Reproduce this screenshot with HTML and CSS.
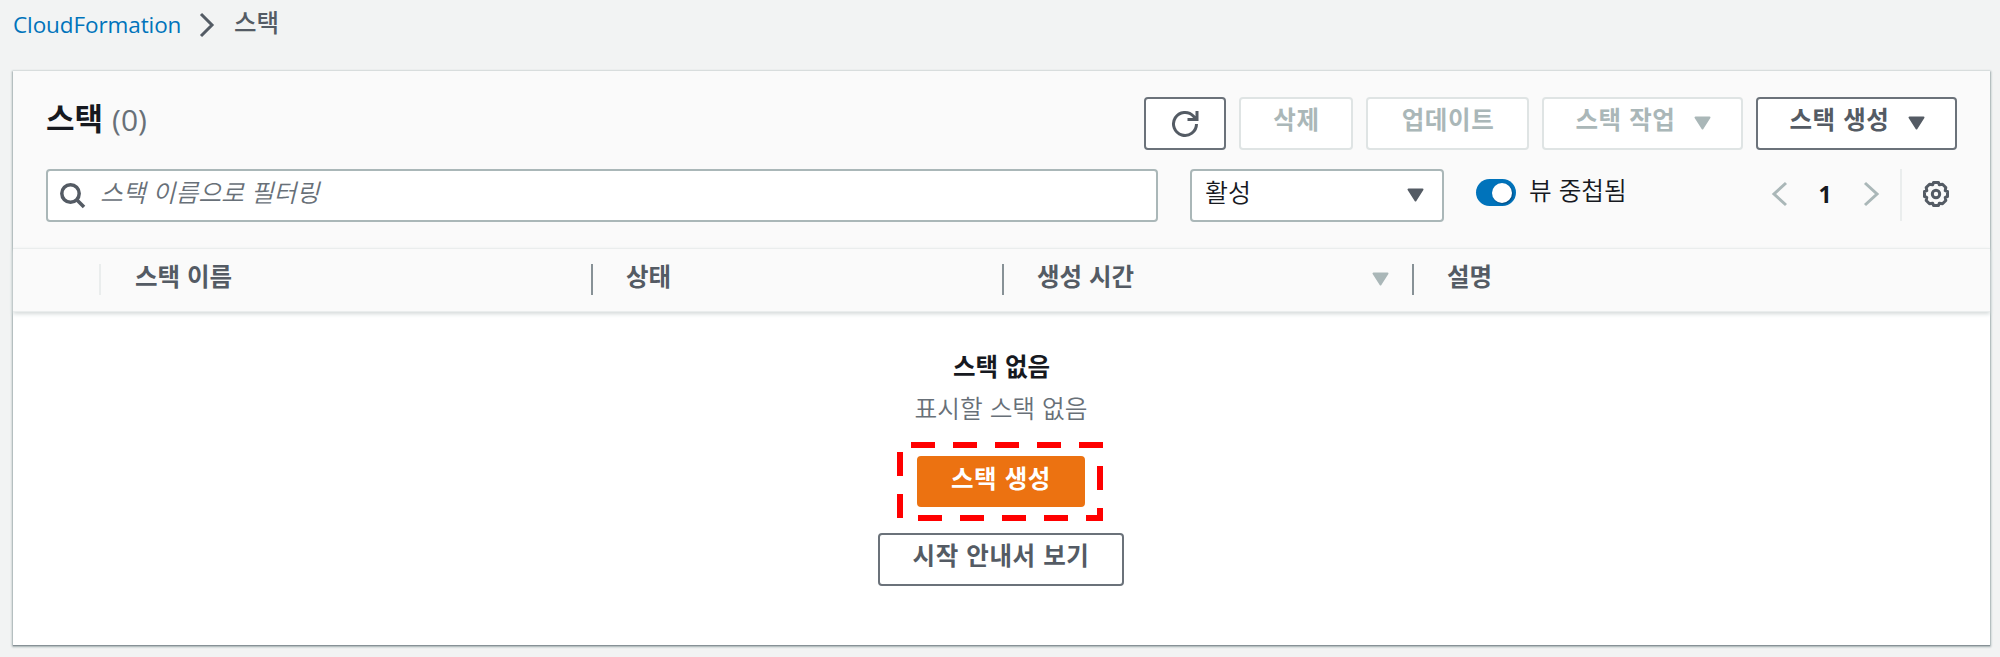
FILE: index.html
```html
<!DOCTYPE html>
<html lang="ko">
<head>
<meta charset="utf-8">
<title>CloudFormation - 스택</title>
<link rel="stylesheet" href="styles.css">
</head>
<body>
<nav class="breadcrumb">
  <a class="crumb-link">CloudFormation</a>
  <svg class="crumb-sep" width="18" height="26" viewBox="0 0 18 26"><path d="M3 2 L14 13 L3 24"/></svg>
  <span class="crumb-current">스택</span>
</nav>
<main class="panel">
  <header class="panel-head">
    <div class="title-row">
      <h1 class="title">스택</h1><span class="count">(0)</span>
      <div class="actions">
        <button class="btn btn-refresh"><svg width="28" height="28" viewBox="0 0 28 28"><path d="M25.500 14 A11.500 11.500 0 1 1 22.500 6.200 L25.500 9.500 M26 1 V9.500 H16.500"/></svg></button>
        <button class="btn btn-delete off"><span>삭제</span></button>
        <button class="btn btn-update off"><span>업데이트</span></button>
        <button class="btn btn-menu off"><span>스택 작업</span><svg class="caret" width="17" height="14" viewBox="0 0 17 14"><path d="M1.500 1.500 H15.500 L8.500 12.500 Z"/></svg></button>
        <button class="btn btn-menu"><span>스택 생성</span><svg class="caret" width="17" height="14" viewBox="0 0 17 14"><path d="M1.500 1.500 H15.500 L8.500 12.500 Z"/></svg></button>
      </div>
    </div>
    <div class="filter-row">
      <div class="search">
        <svg width="26" height="26" viewBox="0 0 26 26"><circle cx="10.500" cy="10.500" r="8.700"/><path d="M16.500 16.500 L24 24"/></svg>
        <span class="placeholder">스택 이름으로 필터링</span>
      </div>
      <div class="select"><span>활성</span><svg class="caret" width="17" height="14" viewBox="0 0 17 14"><path d="M1.500 1.500 H15.500 L8.500 12.500 Z"/></svg></div>
      <div class="toggle"><i class="knob"></i></div>
      <span class="toggle-label">뷰 중첩됨</span>
      <div class="pager">
        <svg class="arrow" width="18" height="26" viewBox="0 0 18 26"><path d="M16 2 L4 13 L16 24"/></svg>
        <span class="page">1</span>
        <svg class="arrow" width="18" height="26" viewBox="0 0 18 26"><path d="M3 2 L15 13 L3 24"/></svg>
        <i class="split"></i>
        <svg class="gear" width="28" height="28" viewBox="0 0 28 28"><path d="M11.500 2.500 H16.500 L17.300 4.800 L20.500 4.200 L23.800 7.500 L23.200 10.700 L25.500 11.500 V16.500 L23.200 17.300 L23.800 20.500 L20.500 23.800 L17.300 23.200 L16.500 25.500 H11.500 L10.700 23.200 L7.500 23.800 L4.200 20.500 L4.800 17.300 L2.500 16.500 V11.500 L4.800 10.700 L4.200 7.500 L7.500 4.200 L10.700 4.800 Z"/><circle cx="14" cy="14" r="3.700"/></svg>
      </div>
    </div>
  </header>
  <div class="columns">
    <div class="col col-select"></div>
    <div class="col col-name"><span>스택 이름</span></div>
    <div class="col col-status"><span>상태</span></div>
    <div class="col col-time"><span>생성 시간</span><svg class="caret" width="17" height="14" viewBox="0 0 17 14"><path d="M1.500 1.500 H15.500 L8.500 12.500 Z"/></svg></div>
    <div class="col col-desc"><span>설명</span></div>
  </div>
  <section class="empty">
    <b class="empty-title">스택 없음</b>
    <span class="empty-text">표시할 스택 없음</span>
    <div class="primary-wrap">
      <button class="btn btn-primary"><span>스택 생성</span></button>
      <svg class="marker" width="206" height="79" viewBox="0 0 206 79">
        <path d="M14 3H38 M56 3H80 M98 3H122 M140 3H164 M182 3H206 M203 24V48 M203 66V79 M206 76H189 M171 76H147 M129 76H105 M87 76H63 M45 76H21 M3 76V52 M3 34V10"/>
      </svg>
    </div>
    <button class="btn btn-guide"><span>시작 안내서 보기</span></button>
  </section>
</main>
</body>
</html>
```

FILE: styles.css
```css
* { box-sizing: border-box; }
body {
  margin: 0;
  height: 657px;
  overflow: hidden;
  background: #f2f3f3;
  color: #16191f;
  font: 25px/36px "Noto Sans CJK KR", sans-serif;
}
svg { display: block; flex: none; fill: none; stroke: #545b64; stroke-width: 3; }
span { white-space: nowrap; }
.breadcrumb { display: flex; height: 71px; padding-left: 13px; }
.crumb-link { width: 185px; margin-top: 7px; color: #0073bb; font: 22.500px/36px "Open Sans", sans-serif; letter-spacing: -0.1px; }
.crumb-sep { margin-top: 12px; }
.crumb-current { margin: 4px 0 0 18px; color: #545b64; font-size: 24.500px; font-weight: 500; }
.panel {
  width: 1977px;
  height: 574px;
  margin-left: 13px;
  background: #fff;
  box-shadow: 0 1px 1px #879196, 0 1px 2px 1px #aab7b8, 0 0 1px #d5dbdb;
}
.panel-head { height: 177px; padding: 26px 33px 0; background: #fafafa; }
.title-row { display: flex; height: 72px; }
.title { margin: -2px 0 0; font-size: 31px; line-height: 44px; font-weight: 700; }
.count { margin: 1px 0 0 9px; color: #687078; font: 30px/44px "Open Sans", sans-serif; }
.actions { display: flex; gap: 13px; margin-left: auto; }
.btn {
  display: flex;
  justify-content: center;
  height: 53px;
  padding: 0;
  background: #fff;
  border: 2px solid #6b727a;
  border-radius: 4px;
  color: #545b64;
  font: 700 24.500px/36px "Noto Sans CJK KR", sans-serif;
  letter-spacing: 0.6px;
}
.btn span { margin: 2px 0 0 1px; }
.btn-refresh { width: 82px; align-items: center; }
.btn-delete { width: 114px; }
.btn-update { width: 163px; }
.btn-menu { width: 201px; }
.off { color: #aab7b8; border-color: #dfe4e4; }
.caret { fill: #545b64; stroke: #545b64; stroke-width: 2; stroke-linejoin: round; }
.off .caret, .col .caret { fill: #aab7b8; stroke: #aab7b8; }
.btn .caret { margin: 17px 0 0 18px; }
.filter-row { display: flex; height: 53px; }
.search, .select { display: flex; height: 53px; background: #fff; border: 2px solid #aab7b8; border-radius: 4px; }
.search { width: 1112px; padding-left: 12px; }
.search svg { margin-top: 12px; stroke-width: 3.500; }
.placeholder { margin: 2px 0 0 14px; color: #687078; font-size: 24.800px; font-style: italic; font-weight: 350; }
.select { width: 254px; margin-left: 32px; padding: 2px 18px 0 13px; justify-content: space-between; font-weight: 350; }
.select .caret { margin-top: 15px; }
.toggle { width: 40px; height: 27px; margin: 10px 0 0 32px; padding: 4px 0 0 16px; border-radius: 14px; background: #0073bb; }
.knob { display: block; width: 20px; height: 20px; border-radius: 50%; background: #fff; box-shadow: 1px 1px 2px #00457a; }
.toggle-label { margin: 2px 0 0 13px; font-size: 24.700px; font-weight: 350; }
.pager { display: flex; margin-left: auto; padding-right: 7px; }
.arrow { margin-top: 12px; stroke: #aab7b8; }
.page { width: 74px; margin-top: 7px; text-align: center; font: 700 23px/36px "Open Sans", sans-serif; }
.split { width: 2px; height: 52px; margin: 0 20px; background: #eaeded; }
.gear { margin-top: 11px; stroke-linejoin: round; }
.columns { position: relative; display: flex; height: 64px; background: #fafafa; border-top: 1px solid #eaeded; border-bottom: 1px solid #eaeded; box-shadow: 0 2px 4px #d5dbdb; padding-top: 15px; color: #545b64; font-weight: 700; font-size: 24.500px; line-height: 30px; }
.col { height: 31px; border-right: 2px solid #879196; padding-left: 33px; }
.col span { display: block; margin-top: -3px; }
.col-select { width: 88px; border-color: #eaeded; }
.col-name { width: 492px; padding-left: 34px; }
.col-status { width: 411px; }
.col-time { display: flex; width: 410px; padding-right: 23px; justify-content: space-between; }
.col-time .caret { margin-top: 8px; }
.col-desc { border: 0; }
.empty { display: flex; flex-direction: column; align-items: center; padding: 36px 2px 0 0; }
.empty-title { margin-left: 2px; line-height: 36px; font-size: 24.500px; }
.empty-text { margin: 5px 0 0 1px; color: #687078; font-size: 24.700px; font-weight: 350; }
.primary-wrap { position: relative; margin-top: 31px; }
.btn-primary { width: 168px; height: 51px; background: #ec7211; border-color: #ec7211; color: #fff; }
.marker { position: absolute; left: -20px; top: -14px; stroke: #f00; stroke-width: 6; }
.btn-guide { width: 246px; height: 53px; margin-top: 26px; }
```
